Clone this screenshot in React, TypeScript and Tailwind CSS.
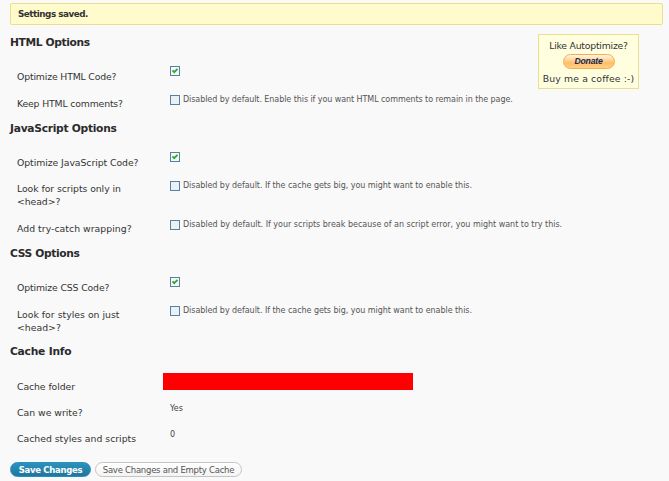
import React from "react";

type Row = {
  label: React.ReactNode;
  tracking?: string;
  height: string;
  offset: string;
  control: React.ReactNode;
};

function Check({ on = false }: { on?: boolean }) {
  return (
    <svg width="10" height="10" viewBox="0 0 10 10" className="block shrink-0">
      <rect x=".5" y=".5" width="9" height="9" fill={on ? "#f1faf5" : "#eaf1f5"} stroke="#5b7f9f" />
      {on && <path d="M2.5 4.4 4.2 6.2 7.5 2.8" fill="none" stroke="#2fa52f" strokeWidth="1.7" />}
    </svg>
  );
}

function Option({ text, tracking = "" }: { text?: string; tracking?: string }) {
  return (
    <div className="flex h-[10px] items-center pl-[7px]">
      <Check on={!text} />
      {text && <span className={`ml-[3px] whitespace-nowrap text-[8px] leading-[10px] text-[#555] ${tracking}`}>{text}</span>}
    </div>
  );
}

function Section({ title, tracking, gap, rows }: { title: string; tracking: string; gap: string; rows: Row[] }) {
  return (
    <section>
      <h3 className={`h-[20px] text-[10.7px] font-bold leading-[22px] text-[#2b2b2b] ${tracking} ${gap}`}>{title}</h3>
      {rows.map((r, i) => (
        <div key={i} className={`flex items-start ${r.height}`}>
          <div className={`w-[153px] shrink-0 whitespace-nowrap pl-[7px] pt-[7px] text-[9.3px] leading-[13px] text-[#333] ${r.tracking ?? ""}`}>{r.label}</div>
          <div className={r.offset}>{r.control}</div>
        </div>
      ))}
    </section>
  );
}

function Value({ children }: { children: React.ReactNode }) {
  return <div className="pl-[7px] text-[8px] leading-[10px] text-[#444]">{children}</div>;
}

export default function App() {
  return (
    <main className="h-[481px] w-[669px] overflow-hidden bg-[#f9f9f9] pl-[10px] pr-[6px] pt-[3px] font-['DejaVu_Sans',sans-serif]">
      <div className="h-[22px] rounded-[2px] border border-[#e9e08c] bg-[#fffbcc] pl-[7px] text-[8.8px] font-bold leading-[21px] tracking-[-0.48px] text-[#333]">
        Settings saved.
      </div>
      <aside className="float-right mr-[24px] mt-[9px] flex h-[55px] w-[101px] flex-col items-center border border-[#e9e08c] bg-[#ffffe0] pt-[4px] text-[9.3px] text-[#333]">
        <span className="whitespace-nowrap leading-[13px] tracking-[-0.22px]">Like Autoptimize?</span>
        <button className="mt-[2px] h-[15px] w-[52px] rounded-full border border-[#f8ad4c] bg-linear-to-b from-[#fff3df] from-5% via-[#ffbe68] via-60% to-[#ffd08a] font-['Liberation_Sans',sans-serif] text-[8.6px] font-bold italic leading-[13px] tracking-[-0.15px] text-[#16264f]">
          Donate
        </button>
        <span className="mt-[3px] whitespace-nowrap leading-[13px] tracking-[0.14px]">Buy me a coffee :-)</span>
      </aside>
      <div className="pt-[7px]">
        <Section
          title="HTML Options"
          tracking="tracking-[-0.37px]"
          gap="mb-[11px]"
          rows={[
            { label: "Optimize HTML Code?", tracking: "tracking-[-0.15px]", height: "h-[27px]", offset: "pt-[3px]", control: <Option /> },
            { label: "Keep HTML comments?", tracking: "tracking-[-0.15px]", height: "h-[28px]", offset: "pt-[5px]", control: <Option tracking="tracking-[-0.072px]" text="Disabled by default. Enable this if you want HTML comments to remain in the page." /> },
          ]}
        />
        <Section
          title="JavaScript Options"
          tracking="tracking-[-0.28px]"
          gap="mb-[11px]"
          rows={[
            { label: "Optimize JavaScript Code?", tracking: "tracking-[-0.06px]", height: "h-[26px]", offset: "pt-[3px]", control: <Option /> },
            { label: <>Look for scripts only in<br />&lt;head&gt;?</>, tracking: "tracking-[-0.06px]", height: "h-[40px]", offset: "pt-[6px]", control: <Option tracking="tracking-[-0.048px]" text="Disabled by default. If the cache gets big, you might want to enable this." /> },
            { label: "Add try-catch wrapping?", tracking: "tracking-[0.04px]", height: "h-[28px]", offset: "pt-[5px]", control: <Option tracking="tracking-[-0.01px]" text="Disabled by default. If your scripts break because of an script error, you might want to try this." /> },
          ]}
        />
        <Section
          title="CSS Options"
          tracking="tracking-[-0.36px]"
          gap="mb-[11px]"
          rows={[
            { label: "Optimize CSS Code?", tracking: "tracking-[-0.13px]", height: "h-[27px]", offset: "pt-[3px]", control: <Option /> },
            { label: <>Look for styles on just<br />&lt;head&gt;?</>, tracking: "tracking-[0.02px]", height: "h-[40px]", offset: "pt-[5px]", control: <Option tracking="tracking-[-0.048px]" text="Disabled by default. If the cache gets big, you might want to enable this." /> },
          ]}
        />
        <Section
          title="Cache Info"
          tracking="tracking-[-0.22px]"
          gap="mb-[12px]"
          rows={[
            { label: "Cache folder", tracking: "tracking-[-0.08px]", height: "h-[26px]", offset: "pt-0", control: <div className="h-[17px] w-[250px] bg-[#ff0000]" /> },
            { label: "Can we write?", height: "h-[26px]", offset: "pt-[5px]", control: <Value>Yes</Value> },
            { label: "Cached styles and scripts", height: "h-[37px]", offset: "pt-[5px]", control: <Value>0</Value> },
          ]}
        />
      </div>
      <div className="flex gap-[4px]">
        <button className="h-[15px] w-[81px] whitespace-nowrap rounded-full border border-[#298cba] bg-linear-to-b from-[#2a92be] to-[#21759b] text-[8.5px] font-bold leading-[14px] tracking-[-0.3px] text-white">
          Save Changes
        </button>
        <button className="h-[15px] w-[147px] whitespace-nowrap rounded-full border border-[#c4c4c4] bg-linear-to-b from-white to-[#f4f4f4] text-[8.5px] leading-[14px] tracking-[-0.25px] text-[#555]">
          Save Changes and Empty Cache
        </button>
      </div>
    </main>
  );
}
